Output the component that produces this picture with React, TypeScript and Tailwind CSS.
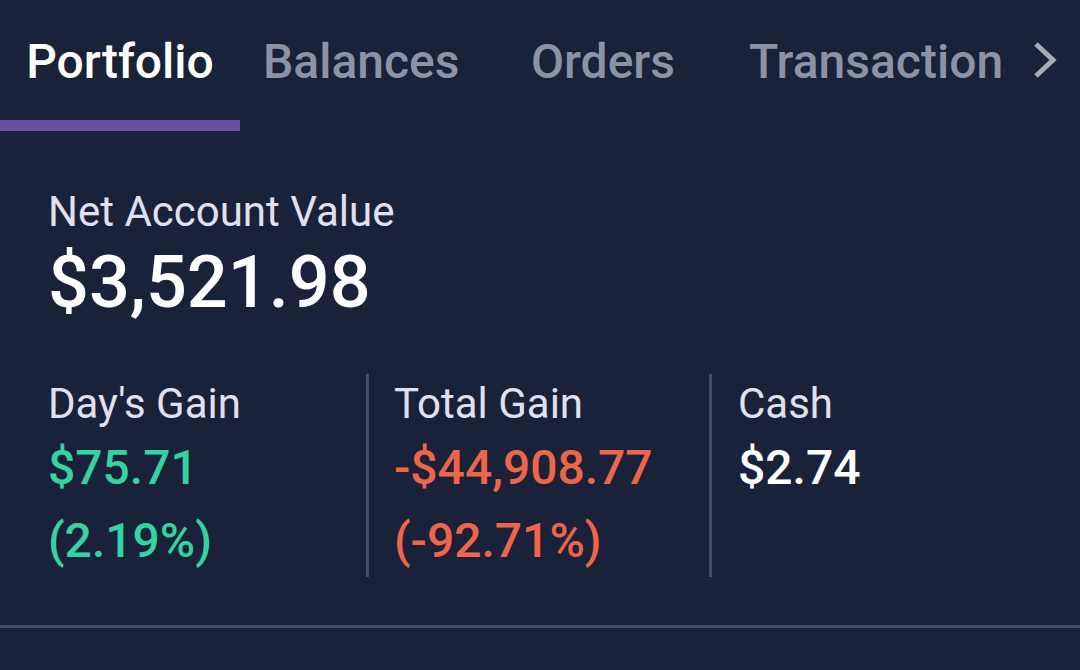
import React from 'react';

const tabs = [
  {label: 'Portfolio', active: true, w: 'w-[240px] justify-center'},
  {label: 'Balances', active: false, w: 'w-[291px] pl-[23px]'},
  {label: 'Orders', active: false, w: 'w-[218px]'},
];

function Stat({
  label,
  value,
  pct,
  color,
  border,
}: {
  label: string;
  value: string;
  pct?: string;
  color: string;
  border?: boolean;
}) {
  return (
    <div className={`flex h-[203px] ${border ? 'border-r-[3px] border-[#464d63]' : ''}`}>
      <div className="flex flex-col pt-[1px]">
        <div className="text-[42px] leading-[58px] text-[#e2e0ef]">{label}</div>
        <div className={`text-[48px] font-medium leading-[70px] ${color}`}>{value}</div>
        {pct && <div className={`text-[48px] font-medium leading-[75px] ${color}`}>{pct}</div>}
      </div>
    </div>
  );
}

export default function App() {
  return (
    <div
      className="w-[1080px] h-[670px] overflow-hidden bg-[#1a2239]"
      style={{fontFamily: 'Roboto, "Liberation Sans", sans-serif'}}
    >
      {/* Tabs */}
      <div className="flex h-[131px] items-stretch">
        {tabs.map((t) => (
          <div key={t.label} className="flex flex-col">
            <div
              className={`flex flex-1 items-start pt-[34px] text-[48px] font-medium leading-[56px] ${t.w} ${
                t.active ? 'text-white' : 'text-[#8c93a4]'
              }`}
            >
              {t.label}
            </div>
            <div className={`h-[11px] ${t.active ? 'bg-[#6651a0]' : ''}`} />
          </div>
        ))}
        <div className="w-[256px] overflow-hidden pt-[34px] text-[48px] font-medium leading-[56px] text-[#8c93a4] whitespace-nowrap">
          Transactions
        </div>
        <div className="flex flex-1 items-start pt-[41px] pl-[27px]">
          <svg width="26" height="38" viewBox="0 0 26 38">
            <polyline
              points="4,3 21,19 4,35"
              fill="none"
              stroke="#a9abb2"
              strokeWidth="5"
              strokeLinejoin="miter"
            />
          </svg>
        </div>
      </div>

      {/* Net value */}
      <div className="pl-[48px] pt-[53px]">
        <div className="text-[42px] leading-[56px] text-[#e2e0ef]">Net Account Value</div>
        <div className="text-[72px] font-medium leading-[86px] text-white">$3,521.98</div>
      </div>

      {/* Stats */}
      <div className="mt-[48px] grid grid-cols-[321px_343px_1fr] pl-[48px]">
        <Stat label="Day's Gain" value="$75.71" pct="(2.19%)" color="text-[#36d3a2]" border />
        <div className="pl-[25px]">
          <Stat label="Total Gain" value="-$44,908.77" pct="(-92.71%)" color="text-[#ef6549]" border />
        </div>
        <div className="pl-[26px]">
          <Stat label="Cash" value="$2.74" color="text-white" />
        </div>
      </div>

      <div className="mt-[48px] h-[3px] bg-[#454c62]" />
    </div>
  );
}
